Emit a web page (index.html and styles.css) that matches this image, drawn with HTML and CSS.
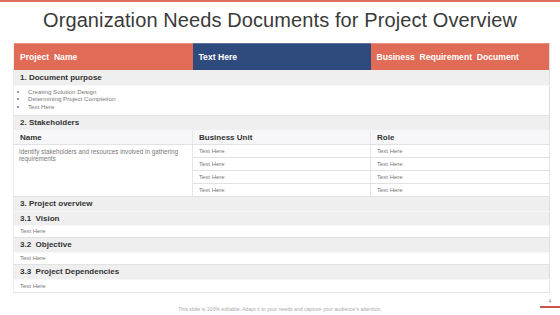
FILE: index.html
```html
<!DOCTYPE html>
<html lang="en">
<head>
    <meta charset="UTF-8">
    <title>Organization Needs Documents for Project Overview</title>
    <link rel="stylesheet" href="styles.css">
</head>
<body>
    <div class="top-line"></div>
    <h1 class="title">Organization Needs Documents for Project Overview</h1>
    <table class="doc-table">
        <colgroup>
            <col class="c1"><col class="c2"><col class="c3">
        </colgroup>
        <thead>
            <tr>
                <th class="orange">Project&nbsp; Name</th>
                <th class="blue">Text Here</th>
                <th class="orange">Business&nbsp; Requirement&nbsp; Document</th>
            </tr>
        </thead>
        <tbody>
            <tr class="section"><td colspan="3">1. Document purpose</td></tr>
            <tr class="bullets">
                <td colspan="3">
                    <ul>
                        <li>Creating Solution Design</li>
                        <li>Determining Project Completion</li>
                        <li>Text Here</li>
                    </ul>
                </td>
            </tr>
            <tr class="section"><td colspan="3">2. Stakeholders</td></tr>
            <tr class="sub">
                <td>Name</td>
                <td>Business Unit</td>
                <td>Role</td>
            </tr>
            <tr class="item">
                <td rowspan="4" class="desc">Identify stakeholders and resources involved in gathering requirements</td>
                <td>Text Here</td>
                <td>Text Here</td>
            </tr>
            <tr class="item"><td>Text Here</td><td>Text Here</td></tr>
            <tr class="item"><td>Text Here</td><td>Text Here</td></tr>
            <tr class="item"><td>Text Here</td><td>Text Here</td></tr>
            <tr class="section"><td colspan="3">3. Project overview</td></tr>
            <tr class="section small"><td colspan="3">3.1&nbsp; Vision</td></tr>
            <tr class="item short"><td colspan="3">Text Here</td></tr>
            <tr class="section"><td colspan="3">3.2&nbsp; Objective</td></tr>
            <tr class="item short"><td colspan="3">Text Here</td></tr>
            <tr class="section"><td colspan="3">3.3&nbsp; Project Dependencies</td></tr>
            <tr class="item"><td colspan="3">Text Here</td></tr>
        </tbody>
    </table>
    <div class="footer">This slide is 100% editable. Adapt it to your needs and capture your audience's attention.</div>
    <div class="page-num">4</div>
</body>
</html>
```

FILE: styles.css
```css
body {
    margin: 0;
    width: 560px;
    height: 315px;
    background: #fff;
    font-family: 'Liberation Sans', Arial, sans-serif;
    color: #333;
    position: relative;
    overflow: hidden;
}
.top-line {
    height: 2px;
    background: #df6e5a;
}
.title {
    margin: 5px 0 0 0;
    height: 35px;
    text-align: center;
    font-size: 20px;
    font-weight: 400;
    color: #3a3a3a;
    letter-spacing: 0.1px;
    line-height: 26px;
}
.doc-table {
    width: 536px;
    margin-left: 13px;
    border-collapse: collapse;
    table-layout: fixed;
    border-right: 1px solid #dcdcdc;
    border-left: 1px solid #ececec;
}
.c1 { width: 179px; }
.c2 { width: 178px; }
.c3 { width: 179px; }
.doc-table th {
    height: 27px;
    padding: 0 6px;
    text-align: left;
    color: #fff;
    font-size: 8.6px;
    font-weight: 700;
    border-top: 2px solid rgba(255,255,255,0.25);
    box-sizing: border-box;
}
.doc-table th.orange { background: #e06b57; }
.doc-table th.blue { background: #2f4a7d; }
.doc-table td {
    padding: 0 6px;
    border-bottom: 1px solid #e2e2e2;
    box-sizing: border-box;
    vertical-align: middle;
}
.section td {
    height: 15px;
    background: #efefef;
    font-size: 8px;
    font-weight: 700;
    color: #333;
    border-bottom-color: #f7f7f7;
}
.section.small td { height: 14px; }
.sub td {
    height: 14px;
    background: #f7f7fa;
    font-size: 8px;
    font-weight: 700;
    color: #333;
    border-right: 1px solid #e6e6e6;
}
.item td {
    height: 13px;
    font-size: 6px;
    color: #777;
    border-right: 1px solid #e6e6e6;
}
.item.short td { height: 12px; }
.item td.desc {
    vertical-align: top;
    padding: 3px 6px 0 5px;
    font-size: 6.3px;
    line-height: 7px;
}
.bullets td {
    height: 30px;
    padding: 2px 4px 3px;
    vertical-align: top;
}
.bullets ul {
    margin: 0;
    padding-left: 10px;
    font-size: 6.2px;
    color: #777;
    line-height: 7.8px;
}
.footer {
    position: absolute;
    left: 0;
    right: 0;
    top: 306px;
    text-align: center;
    font-size: 5.2px;
    color: #aaa;
}
.page-num {
    position: absolute;
    left: 540px;
    top: 298px;
    width: 20px;
    padding-bottom: 2px;
    border-bottom: 2px solid #c8574a;
    text-align: center;
    font-size: 5px;
    color: #888;
}
```
